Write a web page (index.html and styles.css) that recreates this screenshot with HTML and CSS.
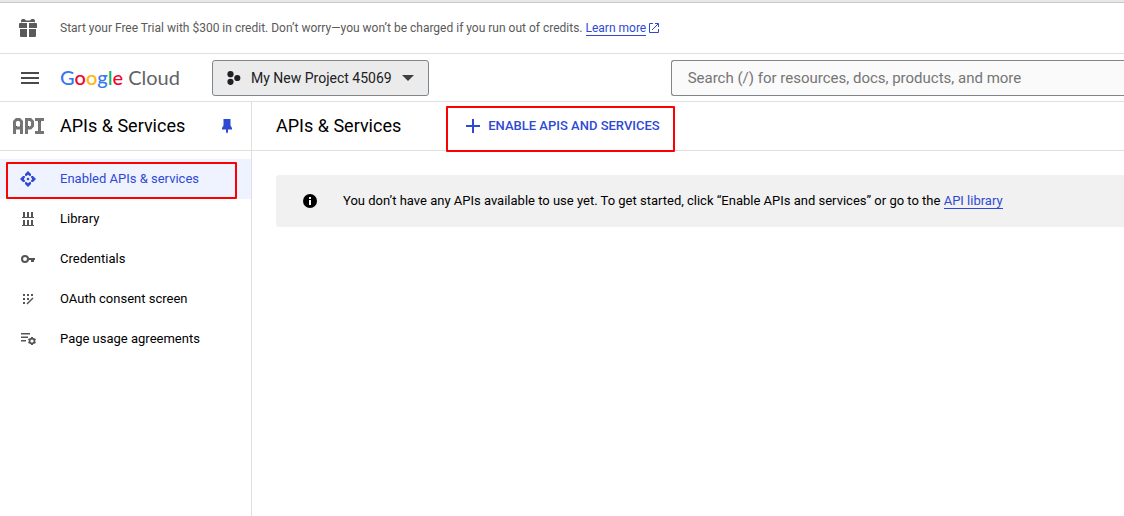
FILE: index.html
```html
<!DOCTYPE html>
<html lang="en">
<head>
<meta charset="utf-8">
<title>APIs &amp; Services – Google Cloud</title>
<link rel="stylesheet" href="styles.css">
</head>
<body>
<div class="page">
  <div class="promo">
    <svg class="promo-icon" width="18" height="18" viewBox="0 0 18 18" aria-hidden="true"><path fill="currentColor" d="M0 5a1 1 0 0 1 1-1h1.500L2 2C2 0 4.500-.3 6 .5L7 1.500h4l1-1C13.500-.3 16 0 16 2l-.5 2H17a1 1 0 0 1 1 1v4h-8V4H8v5H0zM1 10h7v8H2a1 1 0 0 1-1-1zM10 10h7v7a1 1 0 0 1-1 1h-6z"/><path stroke="#fff" d="M2.500 3.500h13M9 4v14"/></svg>
    <p class="promo-text">Start your Free Trial with $300 in credit. Don’t worry—you won’t be charged if you run out of credits. <a class="link" href="#">Learn more</a></p>
    <svg class="external" width="10" height="10" viewBox="0 0 10 10" aria-hidden="true"><path fill="none" stroke="currentColor" d="M4 .5H.5v9h9V6M6 .5h3.500V4M9.300.7 3 7"/></svg>
  </div>

  <header class="topbar">
    <button class="icon-button menu" type="button" aria-label="Navigation menu"><svg width="18" height="12" viewBox="0 0 18 12"><path fill="currentColor" d="M0 0h18v2H0zM0 5h18v2H0zM0 10h18v2H0z"/></svg></button>
    <a class="logo" href="#"><strong><span class="blue">G</span><span class="red">o</span><span class="yellow">o</span><span class="blue">g</span><span class="green">l</span><span class="red">e</span></strong> Cloud</a>
    <button class="project" type="button">
      <svg width="14" height="14" viewBox="0 0 14 14" aria-hidden="true"><g fill="currentColor"><circle cx="3.500" cy="3.200" r="3.100"/><circle cx="3.500" cy="10.800" r="3.100"/><circle cx="10.300" cy="7" r="3.100"/></g></svg>
      <span>My New Project 45069</span>
      <svg class="caret" width="12" height="6" viewBox="0 0 12 6" aria-hidden="true"><path fill="currentColor" d="M0 0h12L6 6z"/></svg>
    </button>
    <input class="search" type="text" aria-label="Search" placeholder="Search (/) for resources, docs, products, and more">
  </header>

  <div class="workspace">
    <aside class="sidebar">
      <div class="sidebar-head">
        <svg class="api-icon" width="32" height="16" viewBox="0 0 32 16" aria-hidden="true"><g fill="none" stroke="currentColor" stroke-width="3"><path d="M1.500 16V3.500l2-2h3l2 2V16M1.500 10h7M13.500 16V1.500h4l2 2V8l-2 2h-4M22 1.500h9M22 14.500h9M26.500 1.500v13"/></g><path fill="#505050" d="M3 8h1v1H3zM7 8h1v1H7zM15 8h1v1h-1zM25 3h1v1h-1zM27 3h1v1h-1z"/></svg>
        <h2 class="title">APIs &amp; Services</h2>
        <button class="icon-button pin" type="button" aria-label="Unpin menu"><svg width="12" height="16" viewBox="0 0 12 16"><path fill="currentColor" d="M2.500 1h7v6.500L11 10v1.500H7V14l-1 1.500L5 14v-2.500H1V10l1.500-2.500z"/></svg></button>
      </div>
      <nav class="nav">
        <a class="nav-item active" href="#"><svg width="16" height="16" viewBox="0 0 16 16" aria-hidden="true"><g fill="currentColor"><path d="M8 0l3 3v1.500L10 5.200 8 3.800 6 5.200 5 4.500V3zM8 16l3-3v-1.500l-1-.7-2 1.400-2-1.400-1 .7V13zM0 8l3-3h1.500l.7 1L3.800 8l1.400 2-.7 1H3zM16 8l-3-3h-1.500l-.7 1 1.400 2-1.400 2 .7 1H13z"/><circle cx="8" cy="8" r="1.300"/></g></svg><span>Enabled APIs &amp; services</span><i class="highlight nav-highlight"></i></a>
        <a class="nav-item" href="#"><svg width="16" height="16" viewBox="0 0 16 16" aria-hidden="true"><path fill="currentColor" d="M2 6h12v1H2zM2 14h12v1H2zM3 1h2v5H3zM7 1h2v5H7zM11 1h2v5h-2zM3 9h2v5H3zM7 9h2v5H7zM11 9h2v5h-2z"/></svg><span>Library</span></a>
        <a class="nav-item" href="#"><svg width="16" height="16" viewBox="0 0 16 16" aria-hidden="true"><circle cx="5" cy="8" r="3" fill="none" stroke="currentColor" stroke-width="2"/><path fill="currentColor" d="M8 7h7v2h-1v2h-3V9H8z"/></svg><span>Credentials</span></a>
        <a class="nav-item" href="#"><svg width="16" height="16" viewBox="0 0 16 16" aria-hidden="true"><path fill="currentColor" d="M3 3h2v2H3zM7 3h2v2H7zM11 3h2v2h-2zM3 7h2v2H3zM7 7h2v2H7zM3 11h2v2H3z"/><path stroke="currentColor" stroke-width="1.500" d="M7 13l6-6"/></svg><span>OAuth consent screen</span></a>
        <a class="nav-item" href="#"><svg width="16" height="16" viewBox="0 0 16 16" aria-hidden="true"><path fill="currentColor" d="M1 2h9v1.500H1zM1 5.500h7V7H1zM1 9h5v1.500H1z"/><circle cx="12" cy="10" r="2.400" fill="none" stroke="currentColor" stroke-width="1.600"/><path stroke="currentColor" stroke-width="2" d="M12 6v1.500M12 12.500V14M8.500 8l1.300.8M14.200 11.200l1.300.8M8.500 12l1.300-.8M14.200 8.800l1.300-.8"/></svg><span>Page usage agreements</span></a>
      </nav>
    </aside>

    <main class="content">
      <div class="content-head">
        <h1 class="title">APIs &amp; Services</h1>
        <button class="enable" type="button"><svg width="14" height="14" viewBox="0 0 14 14" aria-hidden="true"><path fill="currentColor" d="M6 0h2v6h6v2H8v6H6V8H0V6h6z"/></svg><span>ENABLE APIS AND SERVICES</span><i class="highlight enable-highlight"></i></button>
      </div>
      <div class="notice">
        <svg width="14" height="14" viewBox="0 0 14 14" aria-hidden="true"><circle cx="7" cy="7" r="7"/><path fill="#fff" d="M6 3h2v2H6zM6 6h2v5H6z"/></svg>
        <p>You don’t have any APIs available to use yet. To get started, click “Enable APIs and services” or go to the <a class="link" href="#">API library</a></p>
      </div>
    </main>
  </div>
</div>
</body>
</html>
```
FILE: styles.css
```css
* { box-sizing: border-box; }

body {
  margin: 0;
  background: #fff;
  color: #000;
  font-family: Roboto, "Liberation Sans", sans-serif;
  font-size: 13px;
  line-height: 20px;
  overflow: hidden;
}

p, h1, h2 { margin: 0; }

button {
  font-family: inherit;
  border: 0;
  background: none;
  padding: 0;
  cursor: pointer;
}

svg { display: block; flex: none; }

.page {
  display: flex;
  flex-direction: column;
  min-height: 100vh;
  border-top: 2px solid #e8e8e8;
}

.link {
  color: #3049d4;
  text-decoration: none;
  border-bottom: 1px solid #3049d4;
}

.promo {
  display: flex;
  align-items: center;
  height: 52px;
  padding-left: 19px;
  border-top: 1px solid #c8c8c8;
  border-bottom: 1px solid #e0e0e0;
  color: #5a5a5a;
}

.promo-text {
  margin-left: 23px;
  font-size: 12px;
  white-space: nowrap;
}

.external { margin-left: 3px; color: #3049d4; }

.topbar {
  display: flex;
  align-items: center;
  height: 48px;
  border-bottom: 1px solid #e0e0e0;
}

.icon-button { display: flex; align-items: center; justify-content: center; }

.menu { width: 60px; height: 40px; color: #4a4a4a; }

.logo {
  width: 152px;
  flex: none;
  padding-bottom: 2px;
  color: #5f6368;
  font-family: Lato, sans-serif;
  font-size: 20px;
  line-height: 24px;
  text-decoration: none;
}

.logo strong { font-weight: 500; }

.blue { color: #3578f0; }
.red { color: #f5002c; }
.yellow { color: #fbb804; }
.green { color: #10b257; }

.project {
  display: flex;
  align-items: center;
  flex: none;
  gap: 10px;
  height: 36px;
  padding: 0 14px;
  border: 1px solid #80868b;
  border-radius: 3px;
  background: #ebebeb;
  color: #202124;
  font-size: 14px;
}

.caret { color: #3c4043; }

.search {
  flex: 1;
  min-width: 0;
  height: 36px;
  margin-left: 242px;
  padding: 0 16px;
  border: 1px solid #80868b;
  border-right: 0;
  border-radius: 3px 0 0 3px;
  background: #fafafa;
  color: #202124;
  font-family: inherit;
  font-size: 15px;
}

.search::placeholder { color: #757575; opacity: 1; }

.workspace { display: flex; flex: 1; }

.sidebar {
  flex: none;
  width: 252px;
  border-right: 1px solid #e0e0e0;
}

.sidebar-head,
.content-head {
  display: flex;
  align-items: center;
  height: 49px;
  border-bottom: 1px solid #e0e0e0;
}

.sidebar-head { padding: 0 16px 0 13px; }

.api-icon { color: #757575; }

.title { font-size: 18px; font-weight: 400; line-height: 24px; }

.sidebar-head .title { flex: 1; margin-left: 15px; }

.pin { width: 16px; height: 24px; color: #3049d4; }

.nav { padding-top: 8px; }

.nav-item {
  position: relative;
  display: flex;
  align-items: center;
  gap: 24px;
  height: 40px;
  padding-left: 20px;
  color: #000;
  text-decoration: none;
}

.nav-item svg { color: #555; }

.nav-item.active { background: #eff3ff; }

.nav-item.active,
.nav-item.active svg { color: #3049d4; }

.highlight {
  position: absolute;
  border: 2px solid #f00;
  border-radius: 1px;
  pointer-events: none;
}

.nav-highlight { top: 3px; right: 14px; bottom: 0; left: 6px; }

.content { flex: 1; min-width: 0; }

.content-head { padding-left: 24px; }

.enable {
  position: relative;
  display: flex;
  align-items: center;
  gap: 8px;
  height: 36px;
  margin-left: 45px;
  padding: 0 15px 0 20px;
  color: #3049d4;
  font-size: 13px;
  font-weight: 500;
  line-height: 20px;
}

.enable-highlight { top: -2px; right: 0; bottom: -8px; left: 0; }

.notice {
  display: flex;
  align-items: center;
  gap: 26px;
  min-height: 52px;
  margin: 24px 0 0 24px;
  padding-left: 27px;
  border-radius: 3px 0 0 3px;
  background: #f1f1f1;
}
```
